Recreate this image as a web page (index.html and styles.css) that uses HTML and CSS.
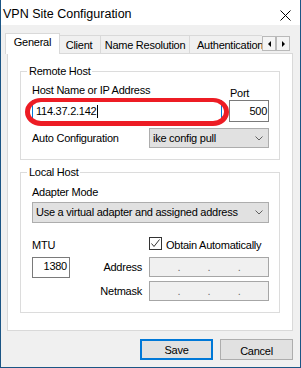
FILE: index.html
```html
<!DOCTYPE html>
<html lang="en">
<head>
    <meta charset="UTF-8">
    <title>VPN Site Configuration</title>
    <link rel="stylesheet" href="styles.css">
</head>
<body>
    <div class="window">
        <div class="titlebar">
            <span class="title">VPN Site Configuration</span>
            <svg class="close" width="11" height="11" viewBox="0 0 11 11">
                <path d="M0.5 0.5 L10.5 10.5 M10.5 0.5 L0.5 10.5" stroke="#000" stroke-width="1" fill="none"/>
            </svg>
        </div>

        <div class="tabs-row">
            <div class="tab-strip">
                <div class="tab active">General</div>
                <div class="tab tab-client">Client</div>
                <div class="tab tab-names">Name Resolution</div>
                <div class="tab tab-auth">Authentication</div>
            </div>
            <div class="tab-scroll">
                <div class="spin"><span class="arrow arrow-left"></span></div>
                <div class="spin"><span class="arrow arrow-right"></span></div>
            </div>
        </div>

        <div class="panel">
            <fieldset class="group group-remote">
                <legend>Remote Host</legend>
                <div class="group-body">
                    <div class="row-labels">
                        <span class="host-lbl">Host Name or IP Address</span>
                        <span class="port-lbl">Port</span>
                    </div>
                    <div class="row-inputs">
                        <div class="host-wrap">
                            <div class="textbox host">114.37.2.142<span class="caret"></span></div>
                            <div class="circle"></div>
                        </div>
                        <div class="textbox port">500</div>
                    </div>
                    <div class="row-auto">
                        <span class="auto-lbl">Auto Configuration</span>
                        <div class="combo combo-small">
                            <span>ike config pull</span>
                            <svg class="chevron" width="8" height="5" viewBox="0 0 8 5"><path d="M0.5 0.5 L4 4 L7.5 0.5" stroke="#606060" fill="none"/></svg>
                        </div>
                    </div>
                </div>
            </fieldset>

            <fieldset class="group group-local">
                <legend>Local Host</legend>
                <div class="group-body">
                    <div class="adapter-lbl">Adapter Mode</div>
                    <div class="combo combo-wide">
                        <span>Use a virtual adapter and assigned address</span>
                        <svg class="chevron" width="8" height="5" viewBox="0 0 8 5"><path d="M0.5 0.5 L4 4 L7.5 0.5" stroke="#606060" fill="none"/></svg>
                    </div>
                    <div class="row-mtu">
                        <span class="mtu-lbl">MTU</span>
                        <span class="checkbox">
                            <svg width="11" height="11" viewBox="0 0 11 11"><path d="M1.5 5.5 L4 8.5 L9.5 1.5" stroke="#333" fill="none"/></svg>
                        </span>
                        <span class="check-lbl">Obtain Automatically</span>
                    </div>
                    <div class="fields">
                        <div class="textbox mtu">1380</div>
                        <span class="field-lbl">Address</span>
                        <div class="ipfield"><span>.</span><span>.</span><span>.</span></div>
                        <span class="field-lbl row2">Netmask</span>
                        <div class="ipfield row2"><span>.</span><span>.</span><span>.</span></div>
                    </div>
                </div>
            </fieldset>
        </div>

        <div class="buttons">
            <button class="btn btn-default">Save</button>
            <button class="btn">Cancel</button>
        </div>
    </div>
</body>
</html>
```

FILE: styles.css
```css
* {
    margin: 0;
    padding: 0;
    box-sizing: border-box;
}

body {
    font-family: 'Liberation Sans', Arial, sans-serif;
    font-size: 11px;
    line-height: 13px;
    letter-spacing: -0.25px;
    color: #000;
    background: #f0f0f0;
}

.window {
    width: 301px;
    height: 368px;
    background: #f0f0f0;
    border: 1px solid #1b5585;
    border-top: none;
    display: flex;
    flex-direction: column;
}

/* title bar */
.titlebar {
    height: 25px;
    flex: none;
    background: #fff;
    display: flex;
    align-items: flex-start;
    padding-left: 2px;
}

.title {
    font-size: 12.5px;
    line-height: 15px;
    letter-spacing: 0;
    margin-top: 7px;
}

.close {
    margin: 10px 9px 0 auto;
}

/* tabs */
.tabs-row {
    display: flex;
    flex: none;
    height: 21px;
    margin: 8px 0 -1px 4px;
}

.tab-strip {
    display: flex;
    align-items: flex-end;
    width: 257px;
    overflow: hidden;
}

.tab {
    flex: none;
    height: 19px;
    border: 1px solid #d9d9d9;
    background: #f0f0f0;
    padding-top: 3px;
    text-align: center;
    white-space: nowrap;
}

.tab.active {
    position: relative;
    z-index: 2;
    width: 55px;
    height: 21px;
    margin-right: -3px;
    padding-top: 2px;
    background: #fff;
    border-bottom: none;
}

.tab-client {
    width: 44px;
}

.tab-names {
    width: 90px;
    margin-left: -1px;
}

.tab-auth {
    width: 90px;
    margin-left: -1px;
    padding-left: 7px;
    text-align: left;
}

.tab-scroll {
    display: flex;
    margin-top: 3px;
    height: 15px;
}

.spin {
    width: 14px;
    height: 15px;
    border: 1px solid #b9b9b9;
    background: #f4f4f4;
    display: flex;
    align-items: center;
    justify-content: center;
}

.arrow {
    width: 0;
    height: 0;
    border-top: 3px solid transparent;
    border-bottom: 3px solid transparent;
}

.arrow-left {
    border-right: 3px solid #000;
}

.arrow-right {
    border-left: 3px solid #000;
}

/* tab page */
.panel {
    position: relative;
    z-index: 1;
    flex: none;
    width: 286px;
    height: 278px;
    margin-left: 6px;
    border: 1px solid #d9d9d9;
    background: #fff;
    padding-top: 11px;
}

.group {
    width: 260px;
    margin-left: 12px;
    border: 1px solid #dcdcdc;
    padding: 0;
    min-width: 0;
}

.group legend {
    margin-left: 6px;
    padding: 0 2px;
    line-height: 13px;
}

.group-remote {
    height: 95px;
}

.group-local {
    height: 147px;
    margin-top: 6px;
}

.group-body {
    padding-left: 11px;
}

.row-labels {
    display: flex;
    align-items: flex-start;
    height: 13px;
    margin-top: 6px;
}

.host-lbl {
    width: 197px;
}

.port-lbl {
    margin-top: 3px;
    padding-left: 1px;
}

.row-inputs {
    display: flex;
    gap: 7px;
    margin-top: 3px;
}

.textbox {
    height: 22px;
    background: #fff;
    border: 1px solid #7a7a7a;
    padding: 4px 3px 0;
    white-space: nowrap;
}

.host {
    width: 190px;
    border-color: #0078d7;
}

.caret {
    display: inline-block;
    width: 1px;
    height: 13px;
    margin-left: 1px;
    background: #000;
    vertical-align: -3px;
}

.host-wrap {
    position: relative;
}

.circle {
    position: absolute;
    left: -7px;
    top: -2px;
    width: 204px;
    height: 28px;
    border: 5px solid #ed1c24;
    border-top-width: 4px;
    border-radius: 16px / 14px;
}

.port {
    width: 40px;
    text-align: right;
    padding-right: 1px;
}

.row-auto {
    display: flex;
    align-items: center;
    margin-top: 6px;
}

.auto-lbl {
    width: 117px;
}

.combo {
    display: flex;
    align-items: center;
    background: #e1e1e1;
    border: 1px solid #adadad;
    padding-left: 3px;
    white-space: nowrap;
}

.combo-small {
    width: 120px;
    height: 20px;
}

.combo-wide {
    width: 237px;
    height: 21px;
    margin-top: 3px;
}

.chevron {
    margin: 0 5px 0 auto;
}

.adapter-lbl {
    margin-top: 7px;
}

.row-mtu {
    display: flex;
    align-items: flex-start;
    height: 15px;
    margin-top: 14px;
}

.mtu-lbl {
    width: 117px;
    padding-top: 2px;
}

.checkbox {
    width: 13px;
    height: 13px;
    border: 1px solid #333;
    background: #fff;
    display: flex;
}

.check-lbl {
    margin-left: 4px;
    padding-top: 2px;
}

.fields {
    display: grid;
    width: 237px;
    grid-template-columns: 38px 1fr 120px;
    grid-auto-rows: 20px;
    column-gap: 7px;
    row-gap: 4px;
    margin-top: 5px;
}

.mtu {
    height: 21px;
    padding: 2px 2px 0 0;
    text-align: right;
}

.field-lbl {
    grid-column: 2;
    align-self: center;
    text-align: right;
}

.ipfield {
    grid-column: 3;
    display: flex;
    justify-content: space-evenly;
    background: #f0f0f0;
    border: 1px solid #a6a6a6;
    padding-top: 3px;
    color: #6d6d6d;
}

.field-lbl.row2,
.ipfield.row2 {
    grid-row: 2;
}

/* dialog buttons */
.buttons {
    display: flex;
    justify-content: flex-end;
    gap: 7px;
    padding-right: 7px;
    margin-top: 8px;
}

.btn {
    width: 73px;
    height: 21px;
    border: 1px solid #adadad;
    background: #e1e1e1;
    font: inherit;
    letter-spacing: inherit;
    line-height: 13px;
    padding-top: 3px;
    text-align: center;
    color: #000;
}

.btn-default {
    border: 2px solid #0078d7;
    padding-top: 2px;
}
```
